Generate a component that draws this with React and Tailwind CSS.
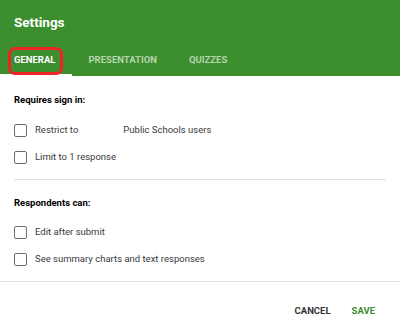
import React from "react";

// Settings dialog of a form, General tab
const signInOptions = [
    { label: "Restrict to", extra: "Public Schools users" },
    { label: "Limit to 1 response" },
];

const respondentOptions = [
    { label: "Edit after submit" },
    { label: "See summary charts and text responses" },
];

function CheckRow({ label, extra }) {
    return (
        <div className="flex items-center h-[27px]">
            <span className="w-[13px] h-[13px] border-[1.5px] border-[#6f6f6f] rounded-[2px] shrink-0" />
            <span className="ml-[8px] text-[9.5px] text-[#3a3a3a]">{label}</span>
            {extra && <span className="ml-[45px] text-[9.5px] text-[#3a3a3a]">{extra}</span>}
        </div>
    );
}

export default function App() {
    return (
        <div className="w-[400px] h-[330px] bg-white font-['Roboto',sans-serif] overflow-hidden">
            {/* green header with tabs */}
            <div className="bg-[#3d8e2f]">
                <div className="h-[45px] flex items-center px-[14px]">
                    <h1 className="text-white text-[13.5px] font-bold">Settings</h1>
                </div>
                <div className="flex h-[31px] text-[9.5px] font-bold">
                    <div className="relative flex items-center pl-[14px] pr-[17px] text-white">
                        GENERAL
                        <span className="absolute left-0 right-0 bottom-0 h-[2px] bg-white" />
                        <span className="absolute left-[8px] top-[2px] w-[55px] h-[28px] border-[3px] border-[#ec2424] rounded-[7px]" />
                    </div>
                    <div className="flex items-center px-[16px] text-[#b3d6ac]">PRESENTATION</div>
                    <div className="flex items-center px-[16px] text-[#b3d6ac]">QUIZZES</div>
                </div>
            </div>

            {/* requires sign in */}
            <div className="px-[14px] pt-[16px] pb-[8px]">
                <div className="text-[9.5px] font-bold text-black h-[16px] flex items-center">Requires sign in:</div>
                <div className="mt-[9px]">
                    {signInOptions.map((o) => (
                        <CheckRow key={o.label} {...o} />
                    ))}
                </div>
            </div>
            <div className="mx-[14px] h-px bg-[#e2e2e2]" />

            {/* respondents */}
            <div className="px-[14px] pt-[15px] pb-[8px]">
                <div className="text-[9.5px] font-bold text-black h-[16px] flex items-center">Respondents can:</div>
                <div className="mt-[8px]">
                    {respondentOptions.map((o) => (
                        <CheckRow key={o.label} {...o} />
                    ))}
                </div>
            </div>
            <div className="h-px bg-[#e4e4e4]" />

            {/* actions */}
            <div className="flex justify-end items-center h-[58px] pr-[25px] gap-[21px] text-[9.5px] font-bold">
                <button className="text-[#333]">CANCEL</button>
                <button className="text-[#3d8e2f]">SAVE</button>
            </div>
        </div>
    );
}
